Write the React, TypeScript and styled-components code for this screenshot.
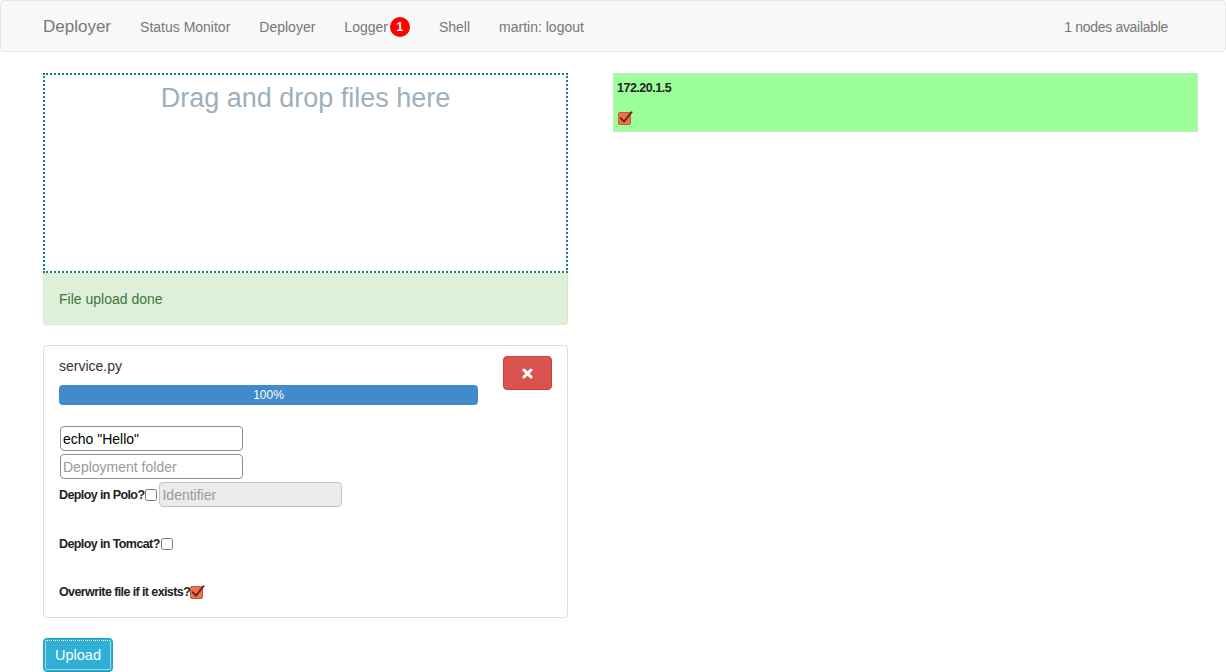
import React from "react";
import styled, { createGlobalStyle } from "styled-components";

const Global = createGlobalStyle`
  html, body { margin: 0; padding: 0; background: #fff; }
  body {
    font-family: "Liberation Sans", Arial, sans-serif;
    font-size: 14px;
    line-height: 20px;
    color: #333;
  }
  * { box-sizing: border-box; }
`;

const NavBar = styled.nav`
  height: 52px;
  background: #f8f8f8;
  border: 1px solid #e7e7e7;
  border-radius: 4px;
  display: flex;
  align-items: center;
  padding: 2px 57px 0 42px;
  margin-bottom: 21px;
`;

const Brand = styled.span`
  font-size: 17px;
  color: #777;
  margin-right: 29px;
`;

const NavLink = styled.span`
  color: #777;
  font-size: 14px;
  display: flex;
  align-items: center;
  margin-right: 29px;
`;

const Badge = styled.span`
  display: inline-flex;
  align-items: center;
  justify-content: center;
  width: 20px;
  height: 20px;
  border-radius: 50%;
  background: #f00;
  color: #fff;
  font-weight: bold;
  font-size: 12px;
  margin-left: 2px;
`;

const Spacer = styled.div`
  flex: 1;
`;

const NodesInfo = styled.span`
  color: #777;
  font-size: 14px;
  letter-spacing: -0.3px;
`;

const Main = styled.div`
  display: flex;
  align-items: flex-start;
  padding-left: 43px;
`;

const LeftCol = styled.div`
  width: 525px;
  display: flex;
  flex-direction: column;
  align-items: stretch;
`;

const RightCol = styled.div`
  width: 585px;
  margin-left: 45px;
`;

const DropZone = styled.div`
  height: 200px;
  border: 2px dotted #10808f;
  text-align: center;
  padding-top: 7px;
  font-size: 27px;
  line-height: 32px;
  color: #9db0be;
`;

const Alert = styled.div`
  background: #dff0d8;
  border: 1px solid #d6e9c6;
  border-top: none;
  border-radius: 0 0 4px 4px;
  color: #3c763d;
  padding: 16px 15px 15px 15px;
  height: 52px;
  margin-bottom: 20px;
`;

const Panel = styled.div`
  border: 1px solid #ddd;
  border-radius: 4px;
  padding: 10px 15px 13px 15px;
`;

const PanelHead = styled.div`
  display: flex;
  justify-content: space-between;
`;

const HeadInfo = styled.div`
  width: 419px;
`;

const FileName = styled.div`
  height: 20px;
  margin-bottom: 9px;
`;

const Progress = styled.div`
  height: 20px;
  background: #428bca;
  border-radius: 4px;
  color: #fff;
  font-size: 12px;
  text-align: center;
  line-height: 20px;
`;

const DangerButton = styled.button`
  width: 49px;
  height: 34px;
  background: #d9534f;
  border: 1px solid #d43f3a;
  border-radius: 4px;
  display: flex;
  align-items: center;
  justify-content: center;
  padding: 0;
`;

const Form = styled.div`
  margin-top: 21px;
  display: flex;
  flex-direction: column;
  align-items: flex-start;
`;

const TextInput = styled.input`
  width: 183px;
  height: 25px;
  margin: 0 0 3px 1px;
  border: 1px solid #8f8f8f;
  border-radius: 4px;
  padding: 1px 2px;
  font-family: "Liberation Sans", Arial, sans-serif;
  font-size: 14px;
  color: #000;
  &::placeholder { color: #9a9a9a; }
  &:disabled {
    background: #ebebeb;
    border-color: #c4c4c4;
    margin: 0;
  }
`;

const OptionRow = styled.div<{ $gap: number }>`
  display: flex;
  align-items: center;
  margin-top: ${(p) => p.$gap}px;
  height: 25px;
`;

const OptionLabel = styled.span`
  font-family: "Liberation Sans Narrow", "Liberation Sans", Arial, sans-serif;
  font-weight: bold;
  font-size: 12.5px;
  letter-spacing: -0.6px;
  color: #222;
`;

const Check = styled.input`
  width: 12px;
  height: 12px;
  margin: 0 2px 0 1px;
`;

const UploadButton = styled.button`
  align-self: flex-start;
  margin-top: 20px;
  width: 70px;
  height: 34px;
  background: #31b0d5;
  border: 1px solid #269abc;
  border-radius: 4px;
  color: #fff;
  font-family: "Liberation Sans", Arial, sans-serif;
  font-size: 14.5px;
  outline: 1px dotted #fff;
  outline-offset: -3px;
  padding: 0;
`;

const NodeBox = styled.div`
  height: 59px;
  background: #9cff99;
  border: 1px solid #c2ecc0;
  padding: 4px 3px;
`;

const NodeName = styled.div`
  font-family: "Liberation Sans Narrow", "Liberation Sans", Arial, sans-serif;
  font-weight: bold;
  font-size: 12.5px;
  letter-spacing: -0.5px;
  color: #222;
  height: 20px;
`;

const NodeCheck = styled.div`
  margin-top: 13px;
  margin-left: 1px;
  display: flex;
`;

const OrangeCheck: React.FC = () => (
  <svg width="15" height="14" viewBox="0 0 15 14">
    <rect x="0.5" y="1.5" width="12" height="12" rx="1.5" fill="#ec7350" stroke="#c9573a" />
    <path d="M2.8 7.2 L6 10.6 L13.6 1.2" fill="none" stroke="#6a2a18" strokeWidth="2" strokeLinecap="round" strokeLinejoin="round" />
  </svg>
);

const TimesIcon: React.FC = () => (
  <svg width="11" height="11" viewBox="0 0 11 11">
    <path d="M2 2 L9 9 M9 2 L2 9" stroke="#fff" strokeWidth="3" strokeLinecap="round" />
  </svg>
);

export default function App() {
  return (
    <>
      <Global />
      <NavBar>
        <Brand>Deployer</Brand>
        <NavLink>Status Monitor</NavLink>
        <NavLink>Deployer</NavLink>
        <NavLink>
          Logger<Badge>1</Badge>
        </NavLink>
        <NavLink>Shell</NavLink>
        <NavLink>martin: logout</NavLink>
        <Spacer />
        <NodesInfo>1 nodes available</NodesInfo>
      </NavBar>
      <Main>
        <LeftCol>
          <DropZone>Drag and drop files here</DropZone>
          <Alert>File upload done</Alert>
          <Panel>
            <PanelHead>
              <HeadInfo>
                <FileName>service.py</FileName>
                <Progress>100%</Progress>
              </HeadInfo>
              <DangerButton>
                <TimesIcon />
              </DangerButton>
            </PanelHead>
            <Form>
              <TextInput defaultValue='echo "Hello"' />
              <TextInput placeholder="Deployment folder" />
              <OptionRow $gap={0}>
                <OptionLabel>Deploy in Polo?</OptionLabel>
                <Check type="checkbox" />
                <TextInput placeholder="Identifier" disabled />
              </OptionRow>
              <OptionRow $gap={24}>
                <OptionLabel>Deploy in Tomcat?</OptionLabel>
                <Check type="checkbox" />
              </OptionRow>
              <OptionRow $gap={23}>
                <OptionLabel>Overwrite file if it exists?</OptionLabel>
                <OrangeCheck />
              </OptionRow>
            </Form>
          </Panel>
          <UploadButton>Upload</UploadButton>
        </LeftCol>
        <RightCol>
          <NodeBox>
            <NodeName>172.20.1.5</NodeName>
            <NodeCheck>
              <OrangeCheck />
            </NodeCheck>
          </NodeBox>
        </RightCol>
      </Main>
    </>
  );
}
